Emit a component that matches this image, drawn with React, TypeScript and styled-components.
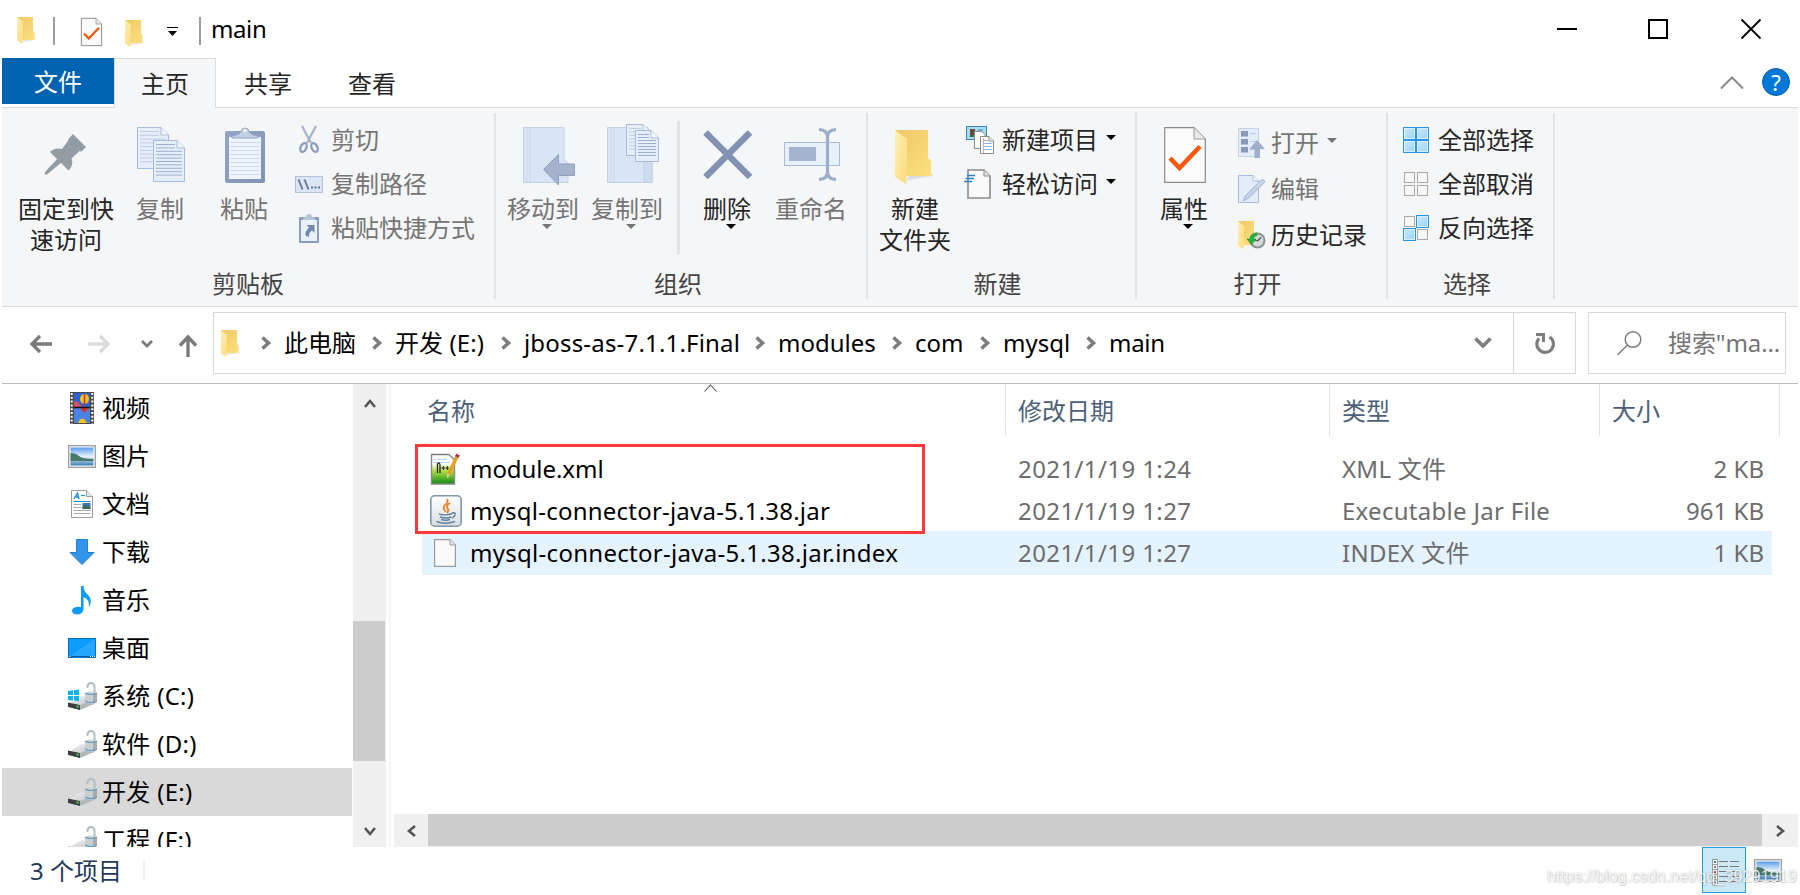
import React from "react";
import styled, { createGlobalStyle } from "styled-components";

const Global = createGlobalStyle`
  * { box-sizing: border-box; }
  body { margin: 0; background: #fff; overflow: hidden; }
  svg { display: block; overflow: visible; flex: none; }
`;

/* ---------- window ---------- */

const Window = styled.div`
  position: relative;
  width: 1800px;
  height: 895px;
  padding: 0 2px;
  display: flex;
  flex-direction: column;
  overflow: hidden;
  background: #fff;
  color: #000;
  font: 24px/30px "Noto Sans", "Noto Sans CJK SC", sans-serif;
  white-space: nowrap;
`;

const TitleBar = styled.header`
  height: 58px;
  display: flex;
  align-items: flex-start;
  padding-left: 15px;
`;

const TitleItem = styled.div<{ $left?: number; $top: number }>`
  margin-left: ${(p) => p.$left ?? 0}px;
  padding-top: ${(p) => p.$top}px;
  flex: none;
`;

const TitleRule = styled.div<{ $left: number }>`
  width: 2px;
  height: 28px;
  margin: 17px 0 0 ${(p) => p.$left}px;
  background: #9c9c9c;
`;

const TitleText = styled.h1`
  margin: 14px 0 0 10px;
  font-size: 24px;
  font-weight: 400;
  letter-spacing: -0.4px;
`;

const Caption = styled.div`
  margin: 19px 37px 0 auto;
  display: flex;
  gap: 71px;
  align-items: center;
  svg:last-child { margin-left: 2px; }
`;

/* ---------- tabs ---------- */

const Tabs = styled.nav`
  height: 49px;
  display: flex;
  position: relative;
  z-index: 1;
`;

const FileTab = styled.div`
  width: 112px;
  height: 46px;
  background: #0063b1;
  color: #fff;
  text-align: center;
  line-height: 47px;
`;

const Tab = styled.div<{ $active?: boolean }>`
  width: ${(p) => (p.$active ? 102 : 104)}px;
  height: 50px;
  text-align: center;
  line-height: 50px;
  color: #262626;
  border: solid ${(p) => (p.$active ? "#dadbdc" : "transparent")};
  border-width: 1px 1px 0;
  background: ${(p) => (p.$active ? "#f5f6f7" : "transparent")};
`;

const TabTools = styled.div`
  margin: 10px 8px 0 auto;
  display: flex;
  gap: 18px;
  align-items: center;
  height: 28px;
`;

const Help = styled.div`
  width: 28px;
  height: 28px;
  border-radius: 50%;
  border: 1px solid #0a5ea8;
  background: #0078d7;
  color: #fff;
  text-align: center;
  font-size: 22px;
  line-height: 26px;
`;

/* ---------- ribbon ---------- */

const Ribbon = styled.section`
  height: 200px;
  display: flex;
  border: solid #dadbdc;
  border-width: 1px 0;
  background: #f5f6f7;
  padding: 5px 0 7px;
`;

const Group = styled.div<{ $w: number }>`
  width: ${(p) => p.$w}px;
  flex: none;
  border-right: 2px solid #e2e3e4;
  display: flex;
  flex-direction: column;
`;

const GroupBody = styled.div`
  height: 157px;
  display: flex;
`;

const GroupName = styled.div<{ $shift?: number }>`
  text-align: center;
  color: #444;
  padding-right: ${(p) => p.$shift ?? 0}px;
`;

const BigButton = styled.div<{ $w: number; $left?: number; $dim?: boolean }>`
  width: ${(p) => p.$w}px;
  margin-left: ${(p) => p.$left ?? 0}px;
  flex: none;
  display: flex;
  flex-direction: column;
  align-items: center;
  color: ${(p) => (p.$dim ? "#757575" : "#262626")};
  line-height: 31px;
  text-align: center;
`;

const BigIcon = styled.div`
  width: 60px;
  height: 80px;
  flex: none;
`;

const BigArrow = styled.div<{ $dim?: boolean }>`
  margin: 0 0 0 8px;
  border: 5px solid transparent;
  border-top-color: ${(p) => (p.$dim ? "#757575" : "#000")};
  border-bottom: 0;
`;

const InnerRule = styled.div<{ $left: number }>`
  width: 3px;
  height: 133px;
  margin: 8px 0 0 ${(p) => p.$left}px;
  background: #e2e3e4;
`;

const SmallStack = styled.div<{ $left: number; $top: number; $pitch: number }>`
  margin: ${(p) => p.$top}px 0 0 ${(p) => p.$left}px;
  display: grid;
  grid-auto-rows: ${(p) => p.$pitch}px;
  align-content: start;
`;

const SmallButton = styled.div<{ $dim?: boolean; $icon: number }>`
  display: grid;
  grid-template-columns: ${(p) => p.$icon}px auto auto;
  justify-content: start;
  align-items: center;
  color: ${(p) => (p.$dim ? "#757575" : "#262626")};
`;

const SmallArrow = styled.div<{ $dim?: boolean }>`
  margin: -5px 0 0 8px;
  border: 5px solid transparent;
  border-top-color: ${(p) => (p.$dim ? "#757575" : "#000")};
  border-bottom: 0;
`;

/* ---------- navigation ---------- */

const NavRow = styled.div`
  height: 77px;
  display: flex;
  padding-top: 5px;
  border-bottom: 1px solid #bcbcbc;
`;

const NavButtons = styled.div`
  width: 211px;
  height: 62px;
  display: flex;
  align-items: center;
  padding: 2px 0 0 28px;
`;

const AddressBar = styled.div`
  width: 1363px;
  height: 62px;
  border: 1px solid #d9d9d9;
  display: flex;
  align-items: center;
`;

const Crumb = styled.div<{ $w: number; $ls?: number }>`
  width: ${(p) => p.$w}px;
  display: flex;
  align-items: center;
  flex: none;
  letter-spacing: ${(p) => p.$ls ?? 0}px;
  svg { margin-right: 13px; }
`;

const Refresh = styled.div`
  width: 62px;
  height: 60px;
  margin-left: auto;
  border-left: 1px solid #d9d9d9;
  display: flex;
  align-items: center;
  justify-content: center;
`;

const SearchBox = styled.div`
  width: 198px;
  height: 62px;
  margin-left: 12px;
  border: 1px solid #d9d9d9;
  display: flex;
  align-items: center;
  padding-left: 28px;
  color: #757575;
  letter-spacing: -0.1px;
  svg { margin-right: 26px; }
`;

/* ---------- body ---------- */

const Body = styled.main`
  height: 463px;
  display: flex;
`;

const Tree = styled.aside`
  width: 351px;
  overflow: hidden;
`;

const TreeItem = styled.div<{ $on?: boolean; $drive?: boolean }>`
  width: 350px;
  height: 48px;
  display: flex;
  align-items: center;
  background: ${(p) => (p.$on ? "#d9d9d9" : "transparent")};
  padding-left: 66px;
  letter-spacing: ${(p) => (p.$drive ? 0.3 : 0)}px;
  > span { width: 34px; flex: none; }
`;

const VScroll = styled.div`
  width: 33px;
  background: #f0f0f0;
  display: flex;
  flex-direction: column;
  align-items: center;
  padding: 15px 0 11px;
`;

const VThumb = styled.div`
  width: 32px;
  height: 140px;
  margin: 213px 1px auto 0;
  background: #cdcdcd;
`;

const Files = styled.div`
  margin-left: 3px;
  border-left: 2px solid #f5f5f5;
  width: 1409px;
  display: flex;
  flex-direction: column;
  padding-left: 3px;
`;

const Columns = styled.div`
  position: relative;
  height: 52px;
  display: flex;
  padding-left: 28px;
  color: #4c607a;
  line-height: 54px;
`;

const Column = styled.div<{ $w: number; $first?: boolean }>`
  width: ${(p) => p.$w}px;
  border-right: 1px solid #e3e3e3;
  padding-left: ${(p) => (p.$first ? 5 : 12)}px;
`;

const SortMark = styled.div`
  position: absolute;
  left: 310px;
  top: 0;
`;

const Rows = styled.div`
  position: relative;
  padding: 11px 0 0 28px;
  flex: 1;
`;

const Row = styled.div<{ $on?: boolean }>`
  width: 1350px;
  height: ${(p) => (p.$on ? 44 : 42)}px;
  display: flex;
  align-items: center;
  color: #6d6d6d;
  background: ${(p) => (p.$on ? "#e5f3ff" : "transparent")};
  line-height: 42px;
  padding-top: ${(p) => (p.$on ? 0 : 1)}px;
`;

const Name = styled.div<{ $ls: number }>`
  width: 596px;
  padding-left: 7px;
  display: flex;
  align-items: center;
  color: #000;
  letter-spacing: ${(p) => p.$ls}px;
  > span { width: 41px; flex: none; }
`;

const Stamp = styled.div`
  width: 324px;
  letter-spacing: 0.4px;
`;

const Kind = styled.div`
  width: 270px;
  letter-spacing: 0.28px;
`;

const Size = styled.div`
  flex: 1;
  padding-right: 8px;
  text-align: right;
`;

const Highlight = styled.div`
  position: absolute;
  left: 21px;
  top: 8px;
  width: 510px;
  height: 90px;
  border: 3px solid #fc3838;
`;

const HScroll = styled.div`
  height: 33px;
  background: #f0f0f0;
  display: grid;
  grid-template-columns: 34px 1334px 1fr;
  justify-items: center;
  align-items: center;
`;

const HThumb = styled.div`
  justify-self: stretch;
  align-self: start;
  height: 32px;
  background: #cdcdcd;
`;

const Status = styled.footer`
  height: 48px;
  display: flex;
  align-items: flex-start;
  padding-left: 28px;
  color: #1e395b;
  line-height: 48px;
`;

const StatusRule = styled.div`
  width: 2px;
  height: 22px;
  margin: 12px 0 0 21px;
  background: #f2f2f2;
`;

const DetailsToggle = styled.div`
  width: 44px;
  height: 46px;
  margin-left: auto;
  border: 1px solid #26a0da;
  background: #cbe8f6;
  padding: 11px 0 0 9px;
`;

const ThumbToggle = styled.div`
  margin: 12px 16px 0 8px;
`;

const Watermark = styled.div`
  position: absolute;
  left: 1547px;
  top: 866px;
  font: 16.3px/20px "Liberation Sans", sans-serif;
  color: rgba(255, 255, 255, 0.85);
  text-shadow: 0 0 2px rgba(0, 0, 0, 0.28), 1px 1px 1px rgba(0, 0, 0, 0.1);
`;

/* ---------- icons ---------- */

const Defs = () => (
  <svg width="0" height="0" style={{ position: "absolute" }}>
    <defs>
      <linearGradient id="fold" x1="0" y1="0" x2="1" y2="1">
        <stop offset="0" stopColor="#efc765" />
        <stop offset="1" stopColor="#fce07f" />
      </linearGradient>
      <linearGradient id="flap" x1="0" y1="0" x2="1" y2="1">
        <stop offset="0" stopColor="#fff0b4" />
        <stop offset="1" stopColor="#fbdb7c" />
      </linearGradient>
      <linearGradient id="npp" x1="0" y1="0" x2="0" y2="1">
        <stop offset="0.3" stopColor="#fff" />
        <stop offset="0.55" stopColor="#b4e04a" />
        <stop offset="1" stopColor="#0b8a12" />
      </linearGradient>
      <linearGradient id="sky" x1="0" y1="0" x2="0" y2="1">
        <stop offset="0" stopColor="#5b9bea" />
        <stop offset="0.5" stopColor="#e8f3fb" />
        <stop offset="1" stopColor="#3c7fb5" />
      </linearGradient>
      <linearGradient id="desk" x1="0" y1="0" x2="1" y2="1">
        <stop offset="0.5" stopColor="#0c9bff" />
        <stop offset="0.5" stopColor="#27a6ff" />
      </linearGradient>
      <linearGradient id="clip" x1="0" y1="0" x2="1" y2="1">
        <stop offset="0" stopColor="#93a6c6" />
        <stop offset="1" stopColor="#7f92b3" />
      </linearGradient>
      <linearGradient id="sel" x1="0" y1="0" x2="1" y2="1">
        <stop offset="0" stopColor="#c4e7ff" />
        <stop offset="1" stopColor="#a0d6fd" />
      </linearGradient>
      <linearGradient id="jar" x1="0" y1="0" x2="0" y2="1">
        <stop offset="0" stopColor="#fff" />
        <stop offset="1" stopColor="#dadde0" />
      </linearGradient>
      <linearGradient id="disk" x1="0" y1="0" x2="1" y2="1">
        <stop offset="0" stopColor="#f0f1f2" />
        <stop offset="1" stopColor="#b9bcc0" />
      </linearGradient>
    </defs>
  </svg>
);

const Folder = ({ w = 19, h = 27 }: { w?: number; h?: number }) => (
  <svg width={w} height={h} viewBox="0 0 39 54" preserveAspectRatio="none">
    <path d="M11 51 L14 46 L39 44 L37 46 L14 50 Z" fill="#000" opacity="0.1" />
    <path d="M0 0 H33 V28 L36 31 V46 H11 Z" fill="url(#fold)" />
    <path d="M0 0 L12 9 V38 L11 54 L0 47 Z" fill="url(#flap)" />
  </svg>
);

const CheckDoc = ({ w, h, s = 1 }: { w: number; h: number; s?: number }) => (
  <svg width={w} height={h} viewBox="0 0 42 56" preserveAspectRatio="none">
    <path d="M.7 .7 H30 L41.3 12 V55.3 H.7 Z" fill="#fbfbfb" stroke="#8a8a8a" strokeWidth={s * 1.2} />
    <path d="M30 .7 V12 H41.3" fill="#e9e9e9" stroke="#9a9a9a" strokeWidth={s} />
    <path d="M6 31 L15.5 41 L36 19.5" fill="none" stroke="#f4590c" strokeWidth="4.6" />
  </svg>
);

const Pin = () => (
  <svg width="60" height="60" viewBox="0 0 60 60">
    <g fill="#929ca4">
      <path d="M37 21 L50 34 L45.500 38.500 L43.500 38 L35.500 45.500 Q38 52 32.500 57.500 L14 39 Q18.500 34 26 36 L32 28 L32.500 26 Z" />
      <path d="M22 45 L26 49 L11 61.500 L8.800 61.500 L9 59 Z" />
    </g>
  </svg>
);

const Page = ({ x, y, w, h, lines, dim }: { x: number; y: number; w: number; h: number; lines: number; dim?: boolean }) => (
  <g transform={`translate(${x} ${y})`}>
    <path d={`M.5 .5 H${w - 8} L${w - 0.5} 8 V${h - 0.5} H.5 Z`} fill="#e6eefa" stroke="#a9bbd8" />
    {Array.from({ length: lines }, (_, i) => (
      <path key={i} d={`M3 ${4.5 + (i * (h - 8)) / lines} H${i < 2 ? w - 10 : w - 3}`} stroke={dim ? "#bfcde4" : "#9db0cf"} />
    ))}
    <path d={`M${w - 8} .5 V8 H${w - 0.5}`} fill="#f3f7fd" stroke="#a9bbd8" />
  </g>
);

const CopyIcon = () => (
  <svg width="60" height="82" viewBox="0 0 60 82">
    <Page x={7} y={14} w={32} h={42} lines={9} dim />
    <Page x={23} y={27} w={32} h={42} lines={10} />
  </svg>
);

const Clipboard = ({ w = 40, h = 57 }: { w?: number; h?: number }) => (
  <svg width={w} height={h} viewBox="0 0 40 57">
    <rect x="0" y="5" width="40" height="52" rx="2" fill="url(#clip)" />
    <rect x="4" y="11" width="32" height="42" fill="#eef4fd" />
    {[16, 20, 24, 28, 32, 36, 40, 44, 48].map((y) => (
      <path key={y} d={`M5 ${y}.500 H35`} stroke="#cfdbec" />
    ))}
    <path d="M7 12 V10 Q14 9 16 6 A4 4 0 1 1 24 6 Q26 9 33 10 V12 Z" fill="#c3cfe2" stroke="#94a5c3" strokeWidth="1" />
    <circle cx="20" cy="4.500" r="1.700" fill="#f5f6f7" />
  </svg>
);

const Scissors = () => (
  <svg width="20" height="28" viewBox="0 0 20 28">
    <path d="M3 0 L12 17 M17 0 L8 17" stroke="#a7b4cb" strokeWidth="2.200" />
    <ellipse cx="4.500" cy="21.500" rx="2.800" ry="4.700" transform="rotate(25 4.500 21.500)" fill="none" stroke="#8b9cbc" strokeWidth="2.300" />
    <ellipse cx="15.500" cy="21.500" rx="2.800" ry="4.700" transform="rotate(-25 15.500 21.500)" fill="none" stroke="#8b9cbc" strokeWidth="2.300" />
  </svg>
);

const PathIcon = () => (
  <svg width="28" height="17" viewBox="0 0 28 17">
    <rect x=".5" y=".5" width="27" height="16" fill="#dbe5f4" stroke="#b3c2db" />
    <path d="M3.500 3.500 L7.500 13.500 M9.500 3.500 L13.500 13.500" stroke="#5f7396" strokeWidth="1.800" />
    <path d="M16 11.500 h2 M19.500 11.500 h2 M23 11.500 h2" stroke="#5f7396" strokeWidth="2" />
  </svg>
);

const PasteLink = () => (
  <svg width="20" height="29" viewBox="0 0 20 29">
    <rect x="0" y="3" width="20" height="26" rx="1" fill="#8c9ebe" />
    <rect x="2" y="6" width="16" height="21" fill="#eaf1fb" />
    <path d="M4 6 V4 L7 3 A3 3 0 0 1 13 3 L16 4 V6 Z" fill="#b7c5db" />
    <path d="M7.500 11 H15.500 V19 L13 16.500 Q9.500 19 10 23 L7 22 Q5 18 10 13.700 Z" fill="#7389b0" />
  </svg>
);

const Book = () => (
  <g>
    <path d="M.5 .5 H41 V33 L45 36 V55.500 H.5 Z" fill="#d9e4f4" stroke="#c3d1e7" />
    <path d="M4 1 V55 M7 1 V55" stroke="#cbd8eb" />
  </g>
);

const MoveIcon = () => (
  <svg width="60" height="82" viewBox="0 0 60 82">
    <g transform="translate(10 14)">
      <Book />
      <path d="M20.500 42.500 L35.500 27.500 V37 H51.500 V48.500 H35.500 V58 Z" fill="#a5b3cd" stroke="#8fa0c0" />
    </g>
  </svg>
);

const CopyToIcon = () => (
  <svg width="60" height="82" viewBox="0 0 60 82">
    <g transform="translate(10 14)">
      <Book />
      <path d="M37 55 V30 L45 36 V55 Z" fill="#cfdcef" stroke="#c0cfe6" />
      <Page x={19} y={-3} w={25} h={32} lines={7} dim />
      <Page x={28} y={3} w={24} h={32} lines={8} />
    </g>
  </svg>
);

const DeleteIcon = () => (
  <svg width="60" height="82" viewBox="0 0 60 82">
    <path d="M8.500 19.500 L53 64 M53 19.500 L8.500 64" stroke="#8192b2" strokeWidth="6.500" />
  </svg>
);

const RenameIcon = () => (
  <svg width="60" height="82" viewBox="0 0 60 82">
    <rect x="3.500" y="29.500" width="55" height="23" fill="#e8f0fc" stroke="#a9bbd8" />
    <rect x="8" y="34" width="27" height="14" fill="#a4b3ce" />
    <path d="M38 16.500 Q46.500 17 46.500 24 Q46.500 17 55 16.500 M46.500 20 V63 M38 66.500 Q46.500 66 46.500 59 Q46.500 66 55 66.500" fill="none" stroke="#9badc9" strokeWidth="3.200" />
  </svg>
);

const NewItem = () => (
  <svg width="28" height="28" viewBox="0 0 28 28">
    <rect x=".5" y=".5" width="20" height="13" fill="#a9dbf5" stroke="#3b87b5" />
    <rect x="4" y="3" width="5" height="8" fill="#6b4b3a" />
    <path d="M3 11 Q6 7 11 11 Z" fill="#2d7d53" />
    <path d="M12 4 H17" stroke="#3b87b5" />
    <path d="M8.500 5.500 H16 L19 8.500 V22.500 H8.500 Z" fill="#fff" stroke="#8c8c8c" />
    <path d="M14.500 10.500 H23 L27.500 15 V27.500 H14.500 Z" fill="#fff" stroke="#8c8c8c" />
    <path d="M17 14.500 H22 M17 17.500 H26 M17 20.500 H26 M17 23.500 H26" stroke="#8fb7e0" />
    <path d="M17.500 12 V27" stroke="#f0a0a0" />
    <path d="M23 10.500 V15 H27.500" fill="#eee" stroke="#8c8c8c" />
  </svg>
);

const EasyAccess = () => (
  <svg width="28" height="30" viewBox="0 0 28 30">
    <path d="M4 1 H20 L26 7 V29 H4 Z" fill="#fafafa" stroke="#8c8c8c" strokeWidth="1.600" />
    <path d="M20 1 V7 H26" fill="#e6e6e6" stroke="#8c8c8c" />
    <path d="M3 6.500 H11 M1.500 9.500 H10 M0 12.500 H8" stroke="#2f80c0" strokeWidth="1.600" />
  </svg>
);

const OpenIcon = () => (
  <svg width="28" height="30" viewBox="0 0 28 30">
    <rect x=".5" y=".5" width="20" height="28" fill="#e3ecf9" stroke="#c5d2e7" />
    {[3, 11, 19].map((y) => (
      <g key={y}>
        <rect x="3" y={y} width="7" height="5.500" fill="#8a9bba" />
        <path d={`M12 ${y + 2.5} h6`} stroke="#b9c7df" />
      </g>
    ))}
    <path d="M19 12 L27 21 H22 V30 H16.500 V21 H11.500 Z" fill="#9fafca" />
  </svg>
);

const EditIcon = () => (
  <svg width="28" height="28" viewBox="0 0 28 28">
    <path d="M.5 .5 H15 L20.500 6 V27.500 H.5 Z" fill="#e3ecf9" stroke="#a9bbd8" />
    <path d="M15 .5 V6 H20.500" fill="#f5f8fd" stroke="#a9bbd8" />
    <path d="M5 26 L7 21 L23 5 Q27 3.500 26.500 7.500 L10 23.500 Z" fill="#c6d3e7" stroke="#a3b3cf" strokeWidth=".9" />
  </svg>
);

const HistoryIcon = () => (
  <svg width="28" height="28" viewBox="0 0 28 28">
    <path d="M0 0 H16 V14 L17 16 V24 H6 Z" fill="url(#fold)" />
    <path d="M0 0 L6 5 V20 L5.500 28 L0 25 Z" fill="url(#flap)" />
    <circle cx="19.500" cy="19.500" r="7" fill="#d5d9dc" stroke="#8c9296" strokeWidth="2" />
    <path d="M19.500 20 L23 16.500 M19.500 20 L17 19" stroke="#555" strokeWidth="1.300" />
    <path d="M19 12 Q12.500 12 12 18 H9 L13.500 23.500 L18 18 H15.500 Q15.500 15 19 14.500 Z" fill="#25b53c" stroke="#178a2a" strokeWidth=".6" />
  </svg>
);

const SelectGrid = ({ on }: { on: boolean[] }) => (
  <svg width="26" height="26" viewBox="0 0 26 26">
    {[0, 1, 2, 3].map((i) => {
      const x = (i % 2) * 13;
      const y = Math.floor(i / 2) * 13;
      return on[i] ? (
        <g key={i}>
          <rect x={x + 0.5} y={y + 0.5} width="12" height="12" fill="#d9f0ff" stroke="#2b95e6" />
          <rect x={x + 2} y={y + 2} width="9" height="9" fill="url(#sel)" />
        </g>
      ) : (
        <rect key={i} x={x + 1.5} y={y + 1.5} width="10" height="10" fill="#f7f7f7" stroke="#a8a8a8" />
      );
    })}
  </svg>
);

const ArrowIcon = ({ color, flip }: { color: string; flip?: boolean }) => (
  <svg width="22" height="18" viewBox="0 0 22 18">
    <path d={flip ? "M0 9 H20 M12 1 L20 9 L12 17" : "M22 9 H2 M10 1 L2 9 L10 17"} fill="none" stroke={color} strokeWidth="3.3" />
  </svg>
);

const Chevron = ({ w, h, d, s, c }: { w: number; h: number; d: string; s: number; c: string }) => (
  <svg width={w} height={h} viewBox={`0 0 ${w} ${h}`}>
    <path d={d} fill="none" stroke={c} strokeWidth={s} />
  </svg>
);

const CrumbChevron = () => <Chevron w={10} h={14} d="M1.500 1.500 L7.500 7 L1.500 12.500" s={3.6} c="#7d7d7d" />;

const Photo = () => (
  <svg width="28" height="23" viewBox="0 0 28 23">
    <rect x=".7" y=".7" width="26.600" height="21.600" fill="#fff" stroke="#a2a2a2" strokeWidth="1.400" />
    <rect x="2.500" y="2.500" width="23" height="18" fill="url(#sky)" />
    <path d="M2.500 8 Q8 8 11 11 T25.500 14 V16 H2.500 Z" fill="#47796b" />
  </svg>
);

const Video = () => (
  <svg width="24" height="32" viewBox="0 0 24 32">
    <rect width="24" height="32" fill="#4a4a4a" />
    <path d="M1.700 1 V32 M22.300 1 V32" stroke="#fff" strokeWidth="2" strokeDasharray="2 1.800" />
    <rect x="4" y="1" width="16" height="14" fill="#2f62cf" />
    <rect x="4" y="16" width="16" height="15" fill="#4a83e6" />
    <path d="M4 9 L8 10 L12 15 H4 Z" fill="#d94f63" />
    <ellipse cx="14.500" cy="7" rx="4.500" ry="5" fill="#f2c21b" />
    <path d="M14.500 2 V14" stroke="#c0321c" strokeWidth="1.500" />
    <path d="M10 16 H19 L14.500 21 Z" fill="#d8331f" />
    <path d="M8 31 Q12 22 17 31 Z" fill="#f2c21b" />
    <path d="M4 15.500 H20" stroke="#111" strokeWidth="1.500" />
  </svg>
);

const DocIcon = () => (
  <svg width="22" height="28" viewBox="0 0 22 28">
    <path d="M.5 .5 H15.500 L21.500 6.500 V27.500 H.5 Z" fill="#fff" stroke="#9b9b9b" />
    <path d="M15.500 .5 V6.500 H21.500" fill="#e8e8e8" stroke="#9b9b9b" />
    <path d="M3 9 L6.500 3 L8 9 M4.500 7 H8" stroke="#1d8fd6" strokeWidth="1.400" fill="none" />
    <path d="M10 5.500 H14 M2.500 11.500 H19.500" stroke="#1d8fd6" strokeWidth="1.200" />
    <path d="M2.500 14.500 H10 M2.500 17.500 H10 M2.500 20.500 H19.500 M2.500 23.500 H19.500" stroke="#a8a8a8" />
    <rect x="11.500" y="13" width="8" height="6" fill="#3c78ae" />
    <path d="M11.500 17 L15 15 L19.500 18 V19 H11.500 Z" fill="#3d6b55" />
  </svg>
);

const Download = () => (
  <svg width="26" height="26" viewBox="0 0 26 26">
    <path d="M7.500 .5 H18.500 V13.500 H25 L13 25.500 L1 13.500 H7.500 Z" fill="#3395e8" stroke="#1f7fd0" />
  </svg>
);

const Music = () => (
  <svg width="20" height="29" viewBox="0 0 20 29">
    <path d="M9 0 H11.500 Q12 6 16 9 Q21 14 17 21 Q17.500 13 11.500 11 V23 Q11 28 5.500 28.500 Q0 28.500 0 24.500 Q1 20 9 21 Z" fill="#0c9bf5" />
  </svg>
);

const Desktop = () => (
  <svg width="28" height="20" viewBox="0 0 28 20">
    <rect x=".5" y=".5" width="27" height="19" fill="url(#desk)" stroke="#0a6fc0" />
    <path d="M1 18.500 H27" stroke="#0a5ea8" />
    <path d="M1.500 18.500 h1 M22 18.500 h1 M24 18.500 h1 M26 18.500 h1" stroke="#fff" />
  </svg>
);

const Drive = ({ win }: { win?: boolean }) => (
  <svg width="29" height="28" viewBox="0 0 29 28">
    <path d="M0 22 L14 14 L28 18 L26 22 L11 28 Z" fill="url(#disk)" />
    <path d="M0 20.500 L12 23 V28 L0 25 Z" fill="#3d4043" />
    <path d="M12 23 L28 17 V21 L12 28 Z" fill="#b4b7ba" />
    <path d="M8.500 24.500 h2.500" stroke="#36d14a" strokeWidth="1.800" />
    <path d="M19.500 6 V4 Q20 1 23 1 Q26.500 1 26.500 5 V12" fill="none" stroke="#b4bcc2" strokeWidth="2" />
    <path d="M17 11 Q23 8 29 11 V20 Q23 23 17 20 Z" fill="#c9ced3" />
    <path d="M17 11 Q23 14 29 11 M17 19 Q23 22 29 19" fill="none" stroke="#5c9cc4" strokeWidth="1.200" />
    <path d="M25 12.500 L29 11 V20 L25 21 Z" fill="#8d959c" opacity=".6" />
    {win && (
      <g>
        <rect x="0" y="7" width="12" height="12" fill="#fff" />
        <path d="M0 9 L5 8.300 V13 H0 Z M6 8.200 L11 7.500 V13 H6 Z M0 14 H5 V18.500 L0 18 Z M6 14 H11 V19.300 L6 18.600 Z" fill="#08b6f0" />
      </g>
    )}
  </svg>
);

const NppIcon = () => (
  <svg width="30" height="32" viewBox="0 0 30 32">
    <path d="M1.500 1.500 H19 L24.500 7 V31 H1.500 Z" fill="url(#npp)" stroke="#8a8a8a" strokeWidth="1.400" />
    <path d="M2 1.500 H18" stroke="#666" strokeWidth="1.200" strokeDasharray="1 1.200" />
    <path d="M3 6.500 H17 M3 9.500 H20" stroke="#b5d7ef" />
    <path d="M7.500 20 V11 Q9.500 8.500 10 12 V20" stroke="#222" strokeWidth="1.300" fill="none" />
    <path d="M11.500 15 h3.500 M13.300 13 v4 M15.500 15 h3.500 M17.300 13 v4" stroke="#222" strokeWidth="1" fill="none" />
    <path d="M27.500 2.500 L18.500 21.500" stroke="#e5a222" strokeWidth="3.600" />
    <path d="M28 1.500 L26.800 4" stroke="#b73138" strokeWidth="3.800" />
    <path d="M17 20.500 L20 22 L17 25.500 Z" fill="#e9c998" />
  </svg>
);

const JarIcon = () => (
  <svg width="32" height="32" viewBox="0 0 32 32">
    <rect x=".8" y=".8" width="30.400" height="30.400" rx="4" fill="url(#jar)" stroke="#7f97ab" strokeWidth="1.600" />
    <path d="M17 4 Q19 7 15 10 Q12 13 16 17 M20 8 Q15 11 18 14 Q19 16 17 18" fill="none" stroke="#ef7b22" strokeWidth="1.700" />
    <path d="M9 19 Q16 21 22 18.500 M10 22 Q16 24 21 22 M11 24.500 Q16 26 20 24.500 M6.500 26.500 Q15 30 25 26.500 M22 18 Q27 17 24.500 21 Q23 22.500 21.500 23" fill="none" stroke="#5d829e" strokeWidth="1.400" />
  </svg>
);

const BlankDoc = () => (
  <svg width="22" height="28" viewBox="0 0 22 28">
    <path d="M.6 .6 H16 L21.400 6 V27.400 H.6 Z" fill="#fafafa" stroke="#9b9b9b" strokeWidth="1.200" />
    <path d="M16 .6 V6 H21.400" fill="#e8e8e8" stroke="#9b9b9b" />
  </svg>
);

const DetailsIcon = () => (
  <svg width="27" height="27" viewBox="0 0 27 27">
    {["#3d8a8a", "#777", "#c0392b", "#8a8a5a", "#3d8fae"].map((c, i) => (
      <g key={i}>
        <rect x=".5" y={i * 5.1 + 0.5} width="5" height="5" fill="#fff" stroke="#9a9a9a" />
        <rect x="2" y={i * 5.1 + 2} width="2" height="2" fill={c} />
        <path d={`M7 ${i * 5 + 2.5} h9 M18 ${i * 5 + 2.5} h9`} stroke="#777" />
      </g>
    ))}
  </svg>
);

/* ---------- data ---------- */

const crumbs: [string, number, number][] = [
  ["此电脑", 111, 0],
  ["开发 (E:)", 129, 0.1],
  ["jboss-as-7.1.1.Final", 254, 0.18],
  ["modules", 137, 0],
  ["com", 88, 0],
  ["mysql", 106, 0],
  ["main", 90, -0.3],
];

const tree: { name: string; icon: React.ReactNode; inset?: number; on?: boolean; drive?: boolean }[] = [
  { name: "视频", icon: <Video />, inset: 2 },
  { name: "图片", icon: <Photo /> },
  { name: "文档", icon: <DocIcon />, inset: 3 },
  { name: "下载", icon: <Download />, inset: 1 },
  { name: "音乐", icon: <Music />, inset: 4 },
  { name: "桌面", icon: <Desktop /> },
  { name: "系统 (C:)", icon: <Drive win />, drive: true },
  { name: "软件 (D:)", icon: <Drive />, drive: true },
  { name: "开发 (E:)", icon: <Drive />, drive: true, on: true },
  { name: "工程 (F:)", icon: <Drive />, drive: true },
];

const files = [
  { name: "module.xml", ls: -0.05, icon: <NppIcon />, date: "2021/1/19 1:24", kind: "XML 文件", size: "2 KB" },
  { name: "mysql-connector-java-5.1.38.jar", ls: 0.22, icon: <JarIcon />, date: "2021/1/19 1:27", kind: "Executable Jar File", size: "961 KB" },
  { name: "mysql-connector-java-5.1.38.jar.index", ls: 0.29, icon: <BlankDoc />, date: "2021/1/19 1:27", kind: "INDEX 文件", size: "1 KB", on: true },
];

const IconInset = styled.span<{ $x?: number }>`
  padding-left: ${(p) => p.$x ?? 0}px;
`;

const IconSpot = styled.div<{ $x: number; $y: number }>`
  padding: ${(p) => p.$y}px 0 0 ${(p) => p.$x}px;
`;

/* ---------- app ---------- */

export default function App() {
  return (
    <Window>
      <Global />
      <Defs />
      <TitleBar>
        <TitleItem $top={17}><Folder /></TitleItem>
        <TitleRule $left={17} />
        <TitleItem $left={26} $top={18}><CheckDoc w={21} h={28} s={1.6} /></TitleItem>
        <TitleItem $left={23} $top={20}><Folder /></TitleItem>
        <TitleItem $left={23} $top={27}>
          <svg width="11" height="9" viewBox="0 0 11 9"><path d="M0 .5 H11" stroke="#000" /><path d="M1 4 H10 L5.500 9 Z" /></svg>
        </TitleItem>
        <TitleRule $left={21} />
        <TitleText>main</TitleText>
        <Caption>
          <svg width="20" height="20" viewBox="0 0 20 20"><path d="M0 10 H20" stroke="#000" strokeWidth="2" /></svg>
          <svg width="20" height="20" viewBox="0 0 20 20"><rect x="1" y="1" width="18" height="18" fill="none" stroke="#000" strokeWidth="2" /></svg>
          <svg width="20" height="20" viewBox="0 0 20 20"><path d="M.5 .5 L19.500 19.500 M19.500 .5 L.5 19.500" stroke="#000" strokeWidth="1.800" /></svg>
        </Caption>
      </TitleBar>

      <Tabs>
        <FileTab>文件</FileTab>
        <Tab $active>主页</Tab>
        <Tab>共享</Tab>
        <Tab>查看</Tab>
        <TabTools>
          <Chevron w={24} h={13} d="M1 12.500 L12 1.500 L23 12.500" s={2} c="#8a8a8a" />
          <Help>?</Help>
        </TabTools>
      </Tabs>

      <Ribbon>
        <Group $w={494}>
          <GroupBody>
            <BigButton $w={104} $left={12}>
              <BigIcon><Pin /></BigIcon>
              <div>固定到快<br />速访问</div>
            </BigButton>
            <BigButton $w={84} $dim>
              <BigIcon><CopyIcon /></BigIcon>
              <div>复制</div>
            </BigButton>
            <BigButton $w={84} $dim>
              <BigIcon><IconSpot $x={11} $y={13}><Clipboard /></IconSpot></BigIcon>
              <div>粘贴</div>
            </BigButton>
            <SmallStack $left={9} $top={5} $pitch={44}>
              <SmallButton $icon={36} $dim><IconInset $x={4}><Scissors /></IconInset>剪切</SmallButton>
              <SmallButton $icon={36} $dim><PathIcon />复制路径</SmallButton>
              <SmallButton $icon={36} $dim><IconInset $x={4}><PasteLink /></IconInset>粘贴快捷方式</SmallButton>
            </SmallStack>
          </GroupBody>
          <GroupName>剪贴板</GroupName>
        </Group>

        <Group $w={372}>
          <GroupBody>
            <BigButton $w={84} $left={5} $dim>
              <BigIcon><MoveIcon /></BigIcon>
              <div>移动到</div>
              <BigArrow $dim />
            </BigButton>
            <BigButton $w={84} $dim>
              <BigIcon><CopyToIcon /></BigIcon>
              <div>复制到</div>
              <BigArrow $dim />
            </BigButton>
            <InnerRule $left={8} />
            <BigButton $w={84} $left={5}>
              <BigIcon><DeleteIcon /></BigIcon>
              <div>删除</div>
              <BigArrow />
            </BigButton>
            <BigButton $w={84} $dim>
              <BigIcon><RenameIcon /></BigIcon>
              <div>重命名</div>
            </BigButton>
          </GroupBody>
          <GroupName $shift={6}>组织</GroupName>
        </Group>

        <Group $w={269}>
          <GroupBody>
            <BigButton $w={84} $left={5}>
              <BigIcon><IconSpot $x={10} $y={17}><Folder w={39} h={54} /></IconSpot></BigIcon>
              <div>新建<br />文件夹</div>
            </BigButton>
            <SmallStack $left={7} $top={5} $pitch={44}>
              <SmallButton $icon={38}><IconInset $x={2}><NewItem /></IconInset>新建项目<SmallArrow /></SmallButton>
              <SmallButton $icon={38}><EasyAccess />轻松访问<SmallArrow /></SmallButton>
            </SmallStack>
          </GroupBody>
          <GroupName $shift={8}>新建</GroupName>
        </Group>

        <Group $w={251}>
          <GroupBody>
            <BigButton $w={84} $left={5}>
              <BigIcon><IconSpot $x={10} $y={14}><CheckDoc w={42} h={56} /></IconSpot></BigIcon>
              <div>属性</div>
              <BigArrow />
            </BigButton>
            <SmallStack $left={12} $top={7} $pitch={46}>
              <SmallButton $icon={33} $dim><OpenIcon />打开<SmallArrow $dim /></SmallButton>
              <SmallButton $icon={33} $dim><EditIcon />编辑</SmallButton>
              <SmallButton $icon={33}><HistoryIcon />历史记录</SmallButton>
            </SmallStack>
          </GroupBody>
          <GroupName $shift={8}>打开</GroupName>
        </Group>

        <Group $w={167}>
          <GroupBody>
            <SmallStack $left={15} $top={5} $pitch={44}>
              <SmallButton $icon={35}><SelectGrid on={[true, true, true, true]} />全部选择</SmallButton>
              <SmallButton $icon={35}><SelectGrid on={[false, false, false, false]} />全部取消</SmallButton>
              <SmallButton $icon={35}><SelectGrid on={[false, true, true, false]} />反向选择</SmallButton>
            </SmallStack>
          </GroupBody>
          <GroupName $shift={7}>选择</GroupName>
        </Group>
      </Ribbon>

      <NavRow>
        <NavButtons>
          <ArrowIcon color="#7a7a7a" />
          <TitleItem $left={36} $top={0}><ArrowIcon color="#dcdcdc" flip /></TitleItem>
          <TitleItem $left={31} $top={0}><Chevron w={12} h={8} d="M1 1 L6 6 L11 1" s={2.8} c="#7a7a7a" /></TitleItem>
          <TitleItem $left={26} $top={3}>
            <svg width="18" height="22" viewBox="0 0 18 22"><path d="M9 22 V2 M1 10.500 L9 2 L17 10.500" fill="none" stroke="#7a7a7a" strokeWidth="3.3" /></svg>
          </TitleItem>
        </NavButtons>
        <AddressBar>
          <TitleItem $left={7} $top={0}><Folder /></TitleItem>
          <TitleItem $left={21} $top={0} />
          {crumbs.map(([name, w, ls]) => (
            <Crumb key={name} $w={w} $ls={ls}><CrumbChevron />{name}</Crumb>
          ))}
          <TitleItem $left={298} $top={0}><Chevron w={18} h={12} d="M1.500 1.500 L9 9 L16.500 1.500" s={3.6} c="#7d7d7d" /></TitleItem>
          <Refresh>
            <svg width="20" height="22" viewBox="0 0 20 22">
              <path d="M14.500 5 A8.300 8.300 0 1 1 4 6.500" fill="none" stroke="#7d7d7d" strokeWidth="3.200" />
              <path d="M1 2.500 H8.500 V10" fill="none" stroke="#7d7d7d" strokeWidth="3" />
            </svg>
          </Refresh>
        </AddressBar>
        <SearchBox>
          <svg width="25" height="25" viewBox="0 0 25 25"><circle cx="16" cy="8.500" r="7.800" fill="none" stroke="#7d7d7d" strokeWidth="1.500" /><path d="M10.500 14 L.5 24" stroke="#7d7d7d" strokeWidth="1.500" /></svg>
          搜索"ma...
        </SearchBox>
      </NavRow>

      <Body>
        <Tree>
          {tree.map((t) => (
            <TreeItem key={t.name} $on={t.on} $drive={t.drive}>
              <IconInset $x={t.inset}>{t.icon}</IconInset>
              {t.name}
            </TreeItem>
          ))}
        </Tree>
        <VScroll>
          <Chevron w={12} h={9} d="M1 8 L6 2 L11 8" s={2.6} c="#555" />
          <VThumb />
          <Chevron w={12} h={9} d="M1 1 L6 7 L11 1" s={2.6} c="#555" />
        </VScroll>
        <Files>
          <Columns>
            <Column $w={584} $first>名称</Column>
            <Column $w={324}>修改日期</Column>
            <Column $w={270}>类型</Column>
            <Column $w={180}>大小</Column>
            <SortMark><Chevron w={13} h={8} d="M.5 7.500 L6.500 1 L12.500 7.500" s={1.1} c="#555" /></SortMark>
          </Columns>
          <Rows>
            {files.map((f) => (
              <Row key={f.name} $on={f.on}>
                <Name $ls={f.ls}><IconInset $x={f.on ? 5 : 1}>{f.icon}</IconInset>{f.name}</Name>
                <Stamp>{f.date}</Stamp>
                <Kind>{f.kind}</Kind>
                <Size>{f.size}</Size>
              </Row>
            ))}
            <Highlight />
          </Rows>
          <HScroll>
            <Chevron w={9} h={12} d="M8 1 L2 6 L8 11" s={2.6} c="#555" />
            <HThumb />
            <Chevron w={9} h={12} d="M1 1 L7 6 L1 11" s={2.6} c="#555" />
          </HScroll>
        </Files>
      </Body>

      <Status>
        3 个项目
        <StatusRule />
        <DetailsToggle><DetailsIcon /></DetailsToggle>
        <ThumbToggle><Photo /></ThumbToggle>
      </Status>
      <Watermark>https://blog.csdn.net/qq_39291919</Watermark>
    </Window>
  );
}
